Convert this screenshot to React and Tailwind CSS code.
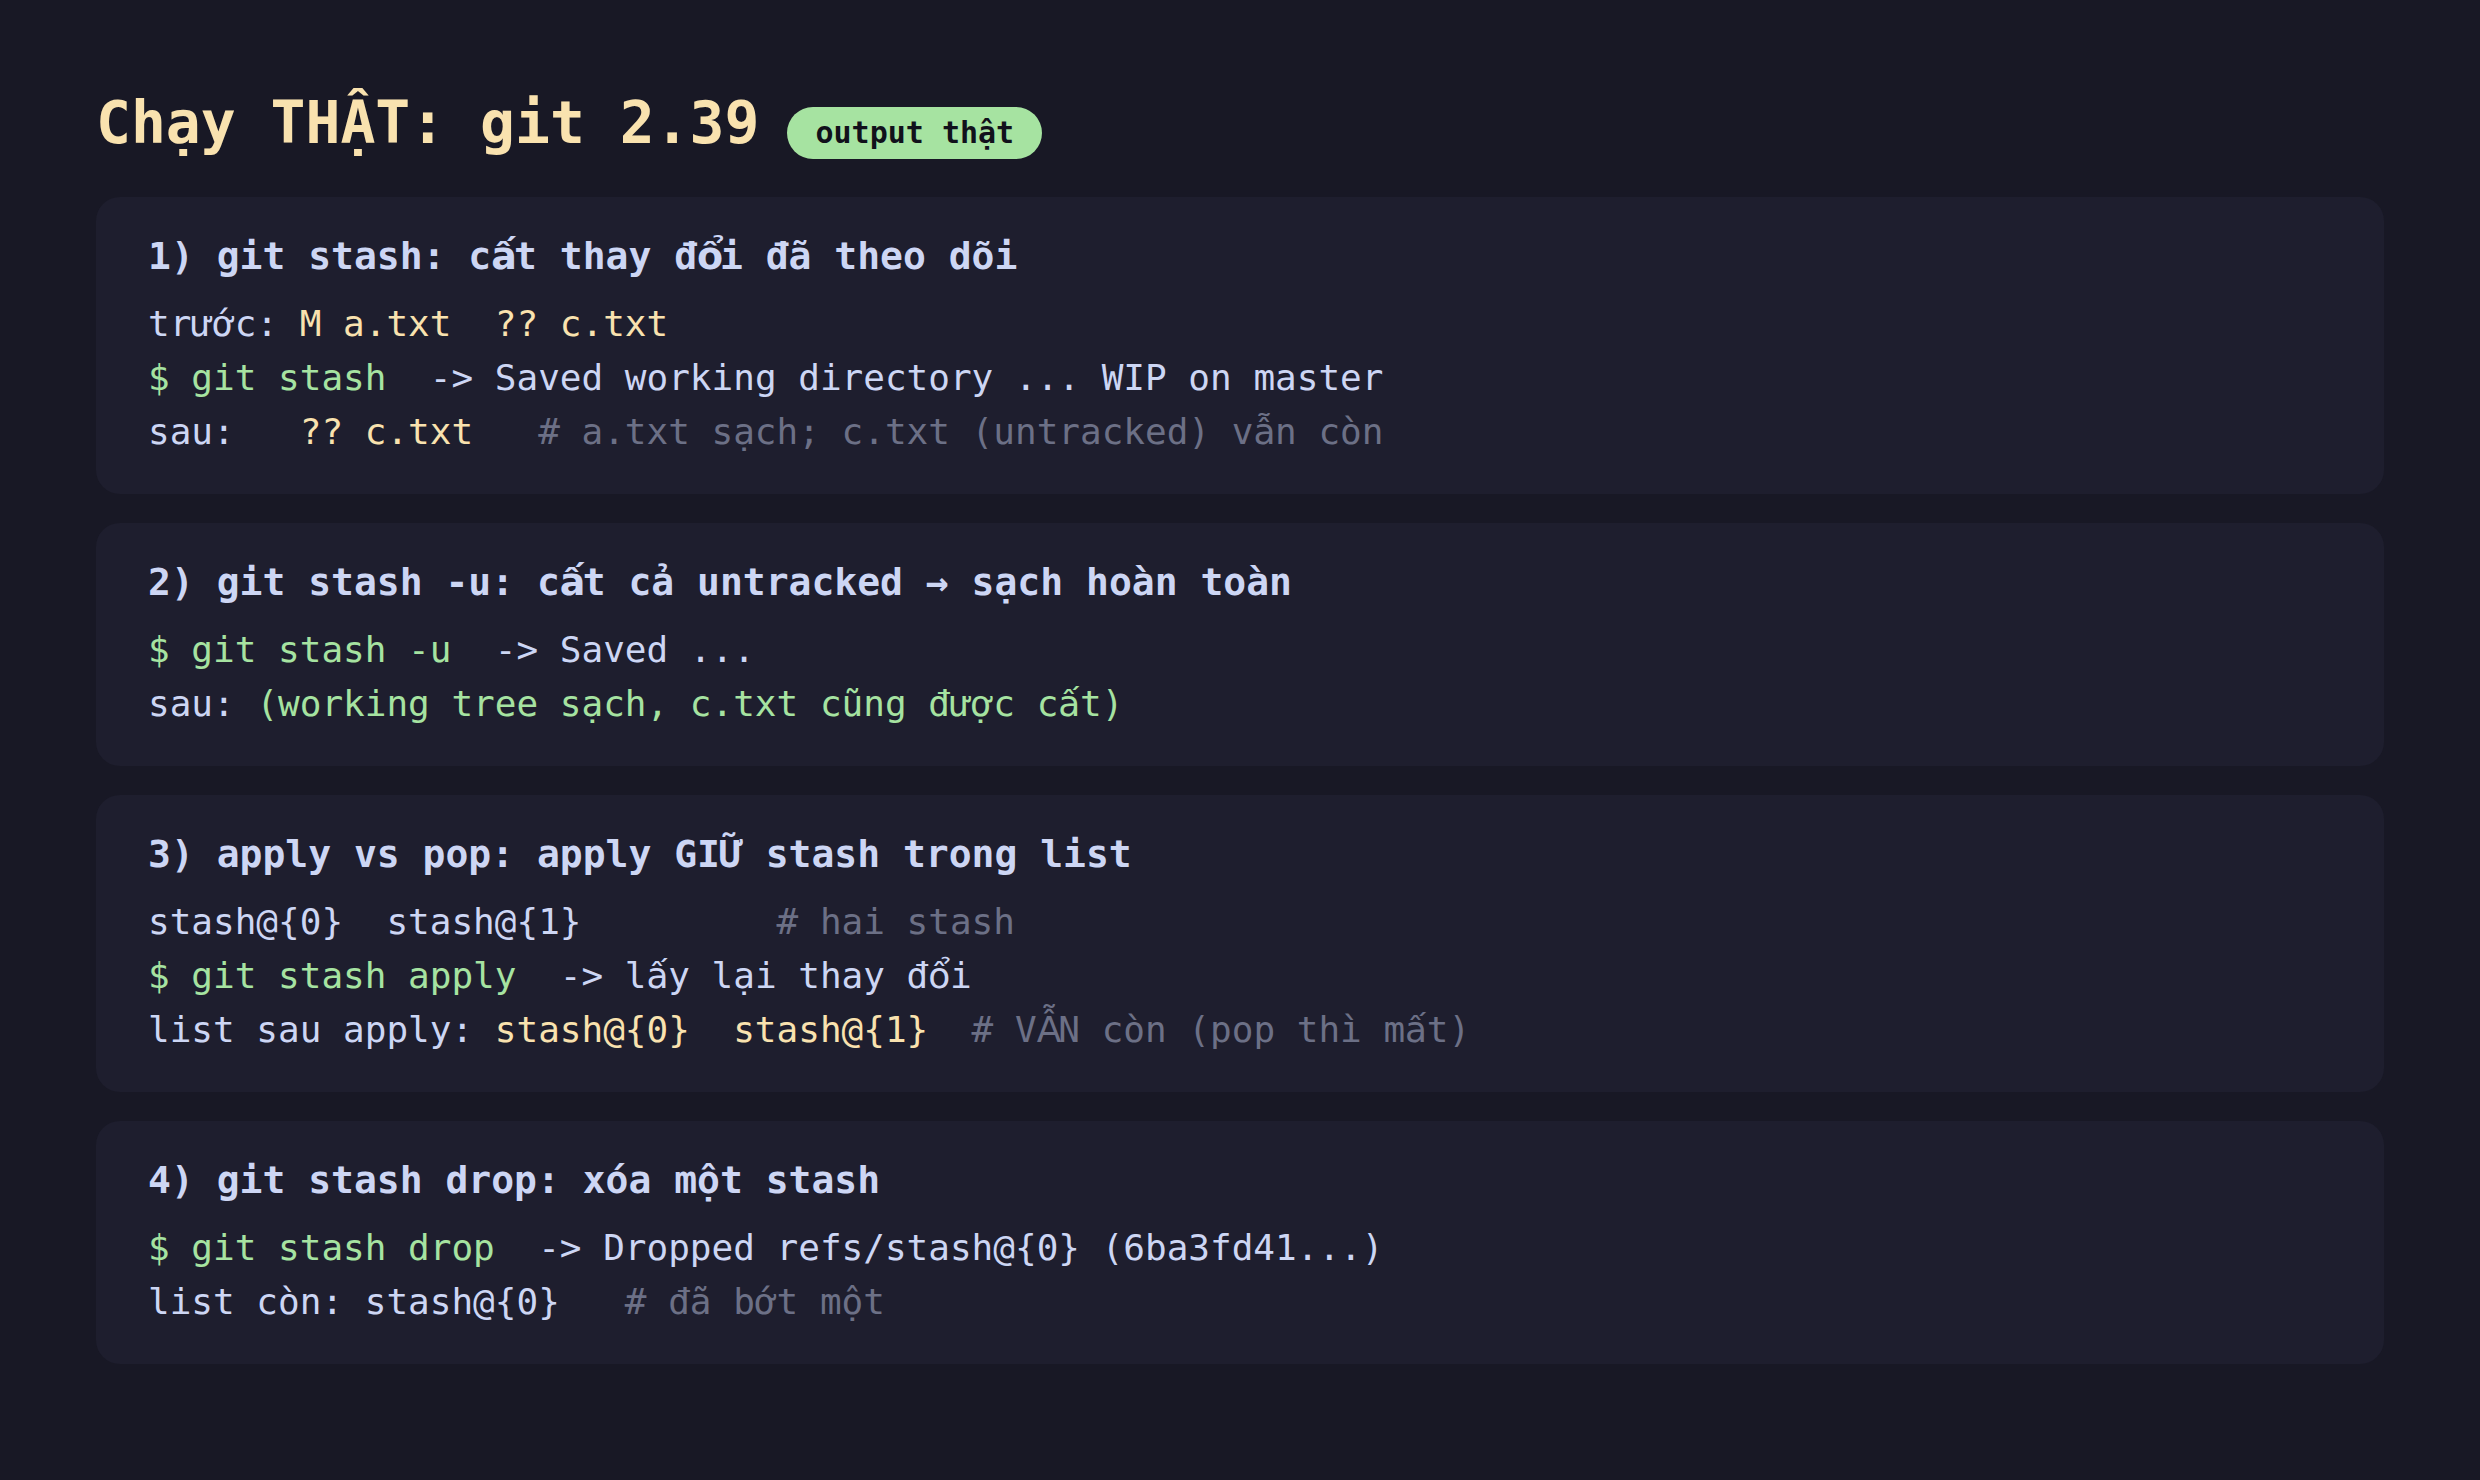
import React from "react";

const mono = "font-['DejaVu_Sans_Mono','Liberation_Mono',monospace]";

// DejaVu Sans Mono stacks circumflex + second accent badly, so those letters
// come from a sans face, kept in a one-cell box so the columns stay aligned
const STACKED = /([ấầẩẫẤẦẨẪếềểễốồổỗỐỒỔỖ])/;

const fix = (text) =>
    text.split(STACKED).map((part, i) =>
        i % 2 === 1 ? (
            <span key={i} className="inline-block w-[0.602em] text-center font-['DejaVu_Sans','Noto_Sans',sans-serif]">
                {part}
            </span>
        ) : (
            part
        )
    );

const colors = {
    t: "text-[#cdd6f4]",
    g: "text-[#a6e3a1]",
    y: "text-[#f9e2af]",
    c: "text-[#6c7086]",
};

const sections = [
    {
        title: "1) git stash: cất thay đổi đã theo dõi",
        lines: [
            [["t", "trước: "], ["y", "M a.txt  ?? c.txt"]],
            [["g", "$ git stash"], ["t", "  -> Saved working directory ... WIP on master"]],
            [["t", "sau:   "], ["y", "?? c.txt"], ["c", "   # a.txt sạch; c.txt (untracked) vẫn còn"]],
        ],
    },
    {
        title: "2) git stash -u: cất cả untracked → sạch hoàn toàn",
        lines: [
            [["g", "$ git stash -u"], ["t", "  -> Saved ..."]],
            [["t", "sau: "], ["g", "(working tree sạch, c.txt cũng được cất)"]],
        ],
    },
    {
        title: "3) apply vs pop: apply GIỮ stash trong list",
        lines: [
            [["t", "stash@{0}  stash@{1}         "], ["c", "# hai stash"]],
            [["g", "$ git stash apply"], ["t", "  -> lấy lại thay đổi"]],
            [["t", "list sau apply: "], ["y", "stash@{0}  stash@{1}"], ["c", "  # VẪN còn (pop thì mất)"]],
        ],
    },
    {
        title: "4) git stash drop: xóa một stash",
        lines: [
            [["g", "$ git stash drop"], ["t", "  -> Dropped refs/stash@{0} (6ba3fd41...)"]],
            [["t", "list còn: stash@{0}"], ["c", "   # đã bớt một"]],
        ],
    },
];

const App = () => {
    return (
        <div className={`min-h-screen bg-[#181825] px-[96px] pt-[89px] pb-[96px] ${mono}`}>
            <div className="flex items-baseline gap-[28px] mb-[38px]">
                <h1 className="text-[58px] leading-[69px] font-bold text-[#f9e2af]">Chạy THẬT: git 2.39</h1>
                <span className="rounded-full bg-[#a6e3a1] px-[28px] py-[8px] text-[30px] leading-[36px] font-bold text-[#11111b]">
                    output thật
                </span>
            </div>
            <div className="flex flex-col gap-[29px]">
                {sections.map((section, index) => (
                    <div key={index} className="rounded-[24px] bg-[#1e1e2e] pl-[52px] pr-8 pt-[31px] pb-[35px]">
                        <h2 className="text-[38px] leading-[57px] font-bold text-[#cdd6f4] mb-[12px] whitespace-pre">
                            {fix(section.title)}
                        </h2>
                        <div className="text-[36px] leading-[54px]">
                            {section.lines.map((line, lIndex) => (
                                <div key={lIndex} className="whitespace-pre">
                                    {line.map(([c, text], sIndex) => (
                                        <span key={sIndex} className={colors[c]}>{fix(text)}</span>
                                    ))}
                                </div>
                            ))}
                        </div>
                    </div>
                ))}
            </div>
        </div>
    );
};

export default App;
